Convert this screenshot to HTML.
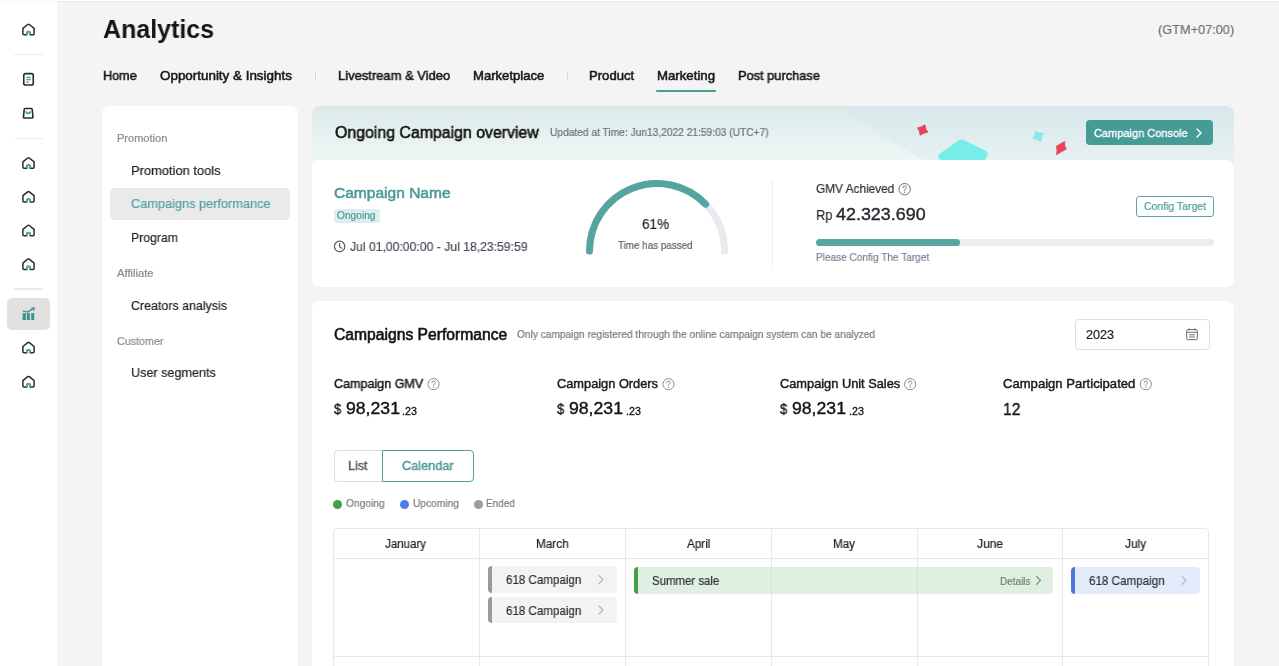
<!DOCTYPE html>
<html><head><meta charset="utf-8"><title>Analytics</title>
<style>
html,body{margin:0;padding:0}
body{width:1279px;height:666px;overflow:hidden;position:relative;background:#f4f4f4;font-family:"Liberation Sans",sans-serif}
.t{position:absolute;line-height:1;white-space:nowrap;transform-origin:0 0;will-change:transform}
.b{position:absolute}
.ic{position:absolute;overflow:visible}
</style></head><body>
<div class="b" style="left:0px;top:0px;width:1279px;height:1px;background:#fdfdfd"></div>
<div class="b" style="left:57px;top:1px;width:1222px;height:1px;background:#eeeeee"></div>
<div class="b" style="left:0px;top:1px;width:57px;height:1px;background:#f7f7f7"></div>
<div class="b" style="left:0px;top:2px;width:57px;height:664px;background:#fff"></div>
<div class="b" style="left:14px;top:53.5px;width:29px;height:1.5px;background:#ebebeb"></div>
<div class="b" style="left:14px;top:137.5px;width:29px;height:1.5px;background:#ebebeb"></div>
<div class="b" style="left:14px;top:288px;width:29px;height:1.5px;background:#ebebeb"></div>
<div class="b" style="left:7px;top:298px;width:43px;height:32px;background:#e1e1e1;border-radius:5px"></div>
<svg class="ic" style="left:20px;top:21px" width="16" height="16" viewBox="0.00 0.00 16 16"><g transform="translate(0.50 0.50)"><path d="M2.4 6.9 L7.2 3.0 Q8 2.4 8.8 3.0 L13.6 6.9 V12.2 Q13.6 13.2 12.6 13.2 H9.6 V11.8 Q9.6 10.1 8 10.1 Q6.4 10.1 6.4 11.8 V13.2 H3.4 Q2.4 13.2 2.4 12.2 Z" fill="none" stroke="#2b2b2b" stroke-width="1.5" stroke-linejoin="round"/><path d="M6.4 13.2 V11.8 Q6.4 10.1 8 10.1 Q9.6 10.1 9.6 11.8 V13.2" fill="none" stroke="#55aaa5" stroke-width="1.5"/></g></svg>
<svg class="ic" style="left:20px;top:155px" width="16" height="16" viewBox="0.00 0.00 16 16"><g transform="translate(0.50 0.00)"><path d="M2.4 6.9 L7.2 3.0 Q8 2.4 8.8 3.0 L13.6 6.9 V12.2 Q13.6 13.2 12.6 13.2 H9.6 V11.8 Q9.6 10.1 8 10.1 Q6.4 10.1 6.4 11.8 V13.2 H3.4 Q2.4 13.2 2.4 12.2 Z" fill="none" stroke="#2b2b2b" stroke-width="1.5" stroke-linejoin="round"/><path d="M6.4 13.2 V11.8 Q6.4 10.1 8 10.1 Q9.6 10.1 9.6 11.8 V13.2" fill="none" stroke="#55aaa5" stroke-width="1.5"/></g></svg>
<svg class="ic" style="left:20px;top:188px" width="16" height="16" viewBox="0.00 0.00 16 16"><g transform="translate(0.50 0.80)"><path d="M2.4 6.9 L7.2 3.0 Q8 2.4 8.8 3.0 L13.6 6.9 V12.2 Q13.6 13.2 12.6 13.2 H9.6 V11.8 Q9.6 10.1 8 10.1 Q6.4 10.1 6.4 11.8 V13.2 H3.4 Q2.4 13.2 2.4 12.2 Z" fill="none" stroke="#2b2b2b" stroke-width="1.5" stroke-linejoin="round"/><path d="M6.4 13.2 V11.8 Q6.4 10.1 8 10.1 Q9.6 10.1 9.6 11.8 V13.2" fill="none" stroke="#55aaa5" stroke-width="1.5"/></g></svg>
<svg class="ic" style="left:20px;top:222px" width="16" height="16" viewBox="0.00 0.00 16 16"><g transform="translate(0.50 0.50)"><path d="M2.4 6.9 L7.2 3.0 Q8 2.4 8.8 3.0 L13.6 6.9 V12.2 Q13.6 13.2 12.6 13.2 H9.6 V11.8 Q9.6 10.1 8 10.1 Q6.4 10.1 6.4 11.8 V13.2 H3.4 Q2.4 13.2 2.4 12.2 Z" fill="none" stroke="#2b2b2b" stroke-width="1.5" stroke-linejoin="round"/><path d="M6.4 13.2 V11.8 Q6.4 10.1 8 10.1 Q9.6 10.1 9.6 11.8 V13.2" fill="none" stroke="#55aaa5" stroke-width="1.5"/></g></svg>
<svg class="ic" style="left:20px;top:256px" width="16" height="16" viewBox="0.00 0.00 16 16"><g transform="translate(0.50 0.20)"><path d="M2.4 6.9 L7.2 3.0 Q8 2.4 8.8 3.0 L13.6 6.9 V12.2 Q13.6 13.2 12.6 13.2 H9.6 V11.8 Q9.6 10.1 8 10.1 Q6.4 10.1 6.4 11.8 V13.2 H3.4 Q2.4 13.2 2.4 12.2 Z" fill="none" stroke="#2b2b2b" stroke-width="1.5" stroke-linejoin="round"/><path d="M6.4 13.2 V11.8 Q6.4 10.1 8 10.1 Q9.6 10.1 9.6 11.8 V13.2" fill="none" stroke="#55aaa5" stroke-width="1.5"/></g></svg>
<svg class="ic" style="left:20px;top:339px" width="16" height="16" viewBox="0.00 0.00 16 16"><g transform="translate(0.50 0.60)"><path d="M2.4 6.9 L7.2 3.0 Q8 2.4 8.8 3.0 L13.6 6.9 V12.2 Q13.6 13.2 12.6 13.2 H9.6 V11.8 Q9.6 10.1 8 10.1 Q6.4 10.1 6.4 11.8 V13.2 H3.4 Q2.4 13.2 2.4 12.2 Z" fill="none" stroke="#2b2b2b" stroke-width="1.5" stroke-linejoin="round"/><path d="M6.4 13.2 V11.8 Q6.4 10.1 8 10.1 Q9.6 10.1 9.6 11.8 V13.2" fill="none" stroke="#55aaa5" stroke-width="1.5"/></g></svg>
<svg class="ic" style="left:20px;top:373px" width="16" height="16" viewBox="0.00 0.00 16 16"><g transform="translate(0.50 0.70)"><path d="M2.4 6.9 L7.2 3.0 Q8 2.4 8.8 3.0 L13.6 6.9 V12.2 Q13.6 13.2 12.6 13.2 H9.6 V11.8 Q9.6 10.1 8 10.1 Q6.4 10.1 6.4 11.8 V13.2 H3.4 Q2.4 13.2 2.4 12.2 Z" fill="none" stroke="#2b2b2b" stroke-width="1.5" stroke-linejoin="round"/><path d="M6.4 13.2 V11.8 Q6.4 10.1 8 10.1 Q9.6 10.1 9.6 11.8 V13.2" fill="none" stroke="#55aaa5" stroke-width="1.5"/></g></svg>
<svg class="ic" style="left:20px;top:71px" width="16" height="16" viewBox="-0.50 0.00 16 16"><rect x="3.25" y="2.65" width="9.5" height="11.3" rx="1.8" fill="none" stroke="#2b2b2b" stroke-width="1.6"/><path d="M5.8 6.3 H10.3 M5.8 8.5 H10.3 M5.8 11 H8.3" stroke="#55aaa5" stroke-width="1.3"/></svg>
<svg class="ic" style="left:20px;top:105px" width="16" height="16" viewBox="-0.20 0.00 16 16"><path d="M5.0 3.45 H11.0 Q11.9 3.45 12.0 4.3 L12.75 11.9 Q12.85 12.95 11.8 12.95 H4.2 Q3.15 12.95 3.25 11.9 L4.0 4.3 Q4.1 3.45 5.0 3.45 Z" fill="none" stroke="#2b2b2b" stroke-width="1.6" stroke-linejoin="round"/><path d="M5.9 6.9 Q8 9.9 10.1 6.9" fill="none" stroke="#4a9c97" stroke-width="1.7" stroke-linecap="round"/></svg>
<svg class="ic" style="left:20px;top:306px" width="16" height="16" viewBox="0.00 0.00 16 16"><rect x="2.6" y="7.1" width="3.3" height="6.9" fill="#3e928c"/><rect x="6.9" y="7.1" width="3.0" height="6.9" fill="#3e928c"/><rect x="11.2" y="7.1" width="3.0" height="6.9" fill="#3e928c"/><path d="M2.8 4.8 L7.3 6.1 L12.2 3.4" fill="none" stroke="#3e928c" stroke-width="1.4"/><path d="M11.2 1.9 L14.6 1.5 L13.9 4.8 Z" fill="#3e928c" stroke="#3e928c" stroke-width="0.5" stroke-linejoin="round"/></svg>
<div class="t" style="left:102.90px;top:16.66px;font-size:25.50px;font-weight:700;color:#141414;transform:scaleX(0.9790);">Analytics</div>
<div class="t" style="left:1157.59px;top:23.39px;font-size:13.60px;font-weight:400;color:#6f6f6f;transform:scaleX(0.9381);-webkit-text-stroke:0.2px #6f6f6f;">(GTM+07:00)</div>
<div class="t" style="left:102.86px;top:69.41px;font-size:13.10px;font-weight:400;color:#181818;transform:scaleX(0.9607);-webkit-text-stroke:0.55px #181818;">Home</div>
<div class="t" style="left:159.98px;top:69.41px;font-size:13.10px;font-weight:400;color:#181818;transform:scaleX(1.0237);-webkit-text-stroke:0.55px #181818;">Opportunity &amp; Insights</div>
<div class="t" style="left:337.52px;top:69.41px;font-size:13.10px;font-weight:400;color:#181818;transform:scaleX(0.9899);-webkit-text-stroke:0.55px #181818;">Livestream &amp; Video</div>
<div class="t" style="left:472.78px;top:69.41px;font-size:13.10px;font-weight:400;color:#181818;-webkit-text-stroke:0.55px #181818;">Marketplace</div>
<div class="t" style="left:589.27px;top:69.41px;font-size:13.10px;font-weight:400;color:#181818;transform:scaleX(0.9935);-webkit-text-stroke:0.55px #181818;">Product</div>
<div class="t" style="left:656.68px;top:69.41px;font-size:13.10px;font-weight:400;color:#181818;transform:scaleX(1.0090);-webkit-text-stroke:0.55px #181818;">Marketing</div>
<div class="t" style="left:737.57px;top:69.41px;font-size:13.10px;font-weight:400;color:#181818;transform:scaleX(0.9787);-webkit-text-stroke:0.55px #181818;">Post purchase</div>
<div class="b" style="left:315px;top:70.5px;width:1px;height:10.0px;background:#d9d9d9"></div>
<div class="b" style="left:566.5px;top:70.5px;width:1.0px;height:10.0px;background:#d9d9d9"></div>
<div class="b" style="left:656px;top:90px;width:60px;height:2px;background:#4b9d98;border-radius:1px"></div>
<div class="b" style="left:102px;top:106px;width:196px;height:614px;background:#fff;border-radius:8px"></div>
<div class="b" style="left:110px;top:188px;width:180px;height:31.5px;background:#eaeaea;border-radius:4px"></div>
<div class="t" style="left:116.50px;top:133.39px;font-size:11.00px;font-weight:400;color:#8a8a8a;transform:scaleX(1.0033);-webkit-text-stroke:0.2px #8a8a8a;">Promotion</div>
<div class="t" style="left:131.20px;top:163.67px;font-size:13.50px;font-weight:400;color:#222;transform:scaleX(0.9554);-webkit-text-stroke:0.2px #222;">Promotion tools</div>
<div class="t" style="left:131.09px;top:196.87px;font-size:13.50px;font-weight:400;color:#4fa19c;transform:scaleX(0.9444);-webkit-text-stroke:0.2px #4fa19c;">Campaigns performance</div>
<div class="t" style="left:131.09px;top:230.57px;font-size:13.50px;font-weight:400;color:#222;transform:scaleX(0.9082);-webkit-text-stroke:0.2px #222;">Program</div>
<div class="t" style="left:116.90px;top:268.39px;font-size:11.00px;font-weight:400;color:#8a8a8a;transform:scaleX(1.0201);-webkit-text-stroke:0.2px #8a8a8a;">Affiliate</div>
<div class="t" style="left:131.09px;top:298.67px;font-size:13.50px;font-weight:400;color:#222;transform:scaleX(0.9207);-webkit-text-stroke:0.2px #222;">Creators analysis</div>
<div class="t" style="left:116.90px;top:335.69px;font-size:11.00px;font-weight:400;color:#8a8a8a;transform:scaleX(0.9753);-webkit-text-stroke:0.2px #8a8a8a;">Customer</div>
<div class="t" style="left:131.09px;top:365.57px;font-size:13.50px;font-weight:400;color:#222;transform:scaleX(0.9342);-webkit-text-stroke:0.2px #222;">User segments</div>
<div class="b" style="left:312px;top:106px;width:922.4px;height:70px;border-radius:8px;overflow:hidden;background:linear-gradient(180deg,#dbe9e9 0%,#f0f7f6 80%)"><div style="position:absolute;left:228px;top:-1366px;width:1520px;height:1520px;border-radius:50%;background:linear-gradient(180deg,#d8e8eb 1366px,#e6f1f1 1420px)"></div></div>
<svg class="ic" style="left:0px;top:0px" width="1279" height="160" viewBox="0.00 0.00 1279 160"><path d="M924.76 125.42 Q924.58 129.23 927.26 131.90 Q923.32 131.95 920.43 134.77 Q920.62 130.82 917.93 128.02 Q921.87 128.11 924.76 125.42 Z" fill="#e8435a" stroke="#e8435a" stroke-width="1.6" stroke-linejoin="round"/><path d="M939 158.5 Q937 156 940 153.5 L958.5 140.5 Q961.5 138.6 964.5 140.2 L986 151 Q989 153 987.5 155.5 L985 160 H940 Z" fill="#77ede9"/><path d="M1035.68 131.50 Q1038.92 134.07 1043.19 133.57 Q1040.36 136.84 1040.64 141.08 Q1037.49 138.29 1033.32 138.55 Q1036.05 135.51 1035.68 131.50 Z" fill="#8de8e8" stroke="#8de8e8" stroke-width="1.6" stroke-linejoin="round"/><path d="M1056.1 146.2 L1064.7 141.3 Q1064.2 146 1066.4 149.1 L1056.4 154.8 Q1057.8 150 1056.1 146.2 Z" fill="#e8435a" stroke="#e8435a" stroke-width="0.6" stroke-linejoin="round"/></svg>
<div class="t" style="left:334.90px;top:124.27px;font-size:16.10px;font-weight:400;color:#141414;transform:scaleX(0.9861);-webkit-text-stroke:0.6px #141414;">Ongoing Campaign overview</div>
<div class="t" style="left:550.39px;top:127.37px;font-size:10.90px;font-weight:400;color:#6c7071;transform:scaleX(0.9368);-webkit-text-stroke:0.2px #6c7071;">Updated at Time: Jun13,2022 21:59:03 (UTC+7)</div>
<div class="b" style="left:1086px;top:120px;width:127px;height:25px;background:#479b97;border-radius:4px"></div>
<div class="t" style="left:1093.92px;top:126.68px;font-size:11.60px;font-weight:400;color:#fff;transform:scaleX(0.9494);-webkit-text-stroke:0.35px #fff;">Campaign Console</div>
<svg class="ic" style="left:1194px;top:127px" width="10" height="12" viewBox="0.00 0.00 10 12"><path d="M3 2 L7 6 L3 10" fill="none" stroke="#fff" stroke-width="1.4" stroke-linecap="round" stroke-linejoin="round"/></svg>
<div class="b" style="left:312px;top:159.5px;width:922.4000000000001px;height:127.0px;background:#fff;border-radius:8px"></div>
<div class="t" style="left:334.18px;top:184.76px;font-size:15.40px;font-weight:400;color:#4b9b96;transform:scaleX(1.0094);-webkit-text-stroke:0.55px #4b9b96;">Campaign Name</div>
<div class="b" style="left:333.5px;top:209px;width:46.5px;height:14px;background:#dcefee;border-radius:3px"></div>
<div class="t" style="left:337.30px;top:211.47px;font-size:10.20px;font-weight:400;color:#4b9b96;-webkit-text-stroke:0.2px #4b9b96;">Ongoing</div>
<svg class="ic" style="left:332px;top:239px" width="15" height="15" viewBox="0.00 0.00 15 15"><circle cx="7.6" cy="7.4" r="5.2" fill="none" stroke="#555a66" stroke-width="1.2"/><path d="M7.6 4.6 V7.6 L9.6 9.2" fill="none" stroke="#555a66" stroke-width="1.2" stroke-linecap="round"/></svg>
<div class="t" style="left:349.59px;top:239.70px;font-size:13.00px;font-weight:400;color:#474c58;transform:scaleX(0.9374);-webkit-text-stroke:0.2px #474c58;">Jul 01,00:00:00 - Jul 18,23:59:59</div>
<svg class="ic" style="left:576px;top:170px" width="170" height="100" viewBox="576.00 170.00 170 100"><path d="M589.50 251.00 A67.5 67.5 0 0 1 724.50 251.00" fill="none" stroke="#e9e9ef" stroke-width="7" stroke-linecap="round"/><path d="M589.50 251.00 A67.5 67.5 0 0 1 705.56 204.11" fill="none" stroke="#54a59f" stroke-width="7" stroke-linecap="round"/></svg>
<div class="t" style="left:641.69px;top:217.04px;font-size:14.60px;font-weight:400;color:#26262e;transform:scaleX(0.9314);-webkit-text-stroke:0.2px #26262e;">61%</div>
<div class="t" style="left:618.09px;top:239.61px;font-size:10.50px;font-weight:400;color:#5c606b;transform:scaleX(0.9365);-webkit-text-stroke:0.2px #5c606b;">Time has passed</div>
<div class="b" style="left:772px;top:180px;width:1px;height:85.5px;background:#ececf0"></div>
<div class="t" style="left:816.39px;top:183.03px;font-size:12.60px;font-weight:400;color:#2e2f38;transform:scaleX(0.9397);-webkit-text-stroke:0.2px #2e2f38;">GMV Achieved</div>
<svg class="ic" style="left:896px;top:181px" width="16" height="16" viewBox="-0.60 -0.20 16 16"><circle cx="8" cy="8" r="5.70" fill="none" stroke="#6b6e78" stroke-width="1"/><path d="M6.3 6.5 Q6.3 4.8 8 4.8 Q9.7 4.8 9.7 6.4 Q9.7 7.4 8.6 7.9 Q8 8.2 8 9.1" fill="none" stroke="#6b6e78" stroke-width="1" stroke-linecap="round"/><circle cx="8" cy="11" r="0.65" fill="#6b6e78"/></svg>
<div class="t" style="left:816.36px;top:207.77px;font-size:14.80px;font-weight:400;color:#26262e;transform:scaleX(0.8650);-webkit-text-stroke:0.15px #26262e;">Rp</div>
<div class="t" style="left:835.99px;top:206.78px;font-size:16.80px;font-weight:400;color:#26262e;transform:scaleX(1.0671);-webkit-text-stroke:0.35px #26262e;">42.323.690</div>
<div class="b" style="left:816px;top:239px;width:397.5px;height:7.300000000000011px;background:#ebebf0;border-radius:4px"></div>
<div class="b" style="left:816px;top:239px;width:144px;height:7.300000000000011px;background:#56a59f;border-radius:4px"></div>
<div class="t" style="left:816.39px;top:252.07px;font-size:10.90px;font-weight:400;color:#7b7f8f;transform:scaleX(0.9235);-webkit-text-stroke:0.2px #7b7f8f;">Please Config The Target</div>
<div class="b" style="left:1136px;top:195.5px;width:77.5px;height:21.30000000000001px;border:1px solid #58a7a2;border-radius:3px;box-sizing:border-box"></div>
<div class="t" style="left:1143.69px;top:200.18px;font-size:11.60px;font-weight:400;color:#4b9b96;transform:scaleX(0.9016);-webkit-text-stroke:0.2px #4b9b96;">Config Target</div>
<div class="b" style="left:312px;top:300.5px;width:922.4000000000001px;height:459.5px;background:#fff;border-radius:8px"></div>
<div class="t" style="left:334.10px;top:326.59px;font-size:15.60px;font-weight:400;color:#141414;transform:scaleX(1.0044);-webkit-text-stroke:0.6px #141414;">Campaigns Performance</div>
<div class="t" style="left:517.49px;top:329.47px;font-size:10.90px;font-weight:400;color:#777777;transform:scaleX(0.9315);-webkit-text-stroke:0.2px #777777;">Only campaign registered through the online campaign system can be analyzed</div>
<div class="b" style="left:1075px;top:318.5px;width:135px;height:31.80000000000001px;border:1px solid #dcdcdc;border-radius:4px;box-sizing:border-box"></div>
<div class="t" style="left:1085.70px;top:328.80px;font-size:12.40px;font-weight:400;color:#222;transform:scaleX(1.0148);-webkit-text-stroke:0.2px #222;">2023</div>
<svg class="ic" style="left:1184px;top:326px" width="16" height="16" viewBox="0.00 0.00 16 16"><rect x="2.7" y="3.6" width="10.6" height="10" rx="1" fill="none" stroke="#6e6e6e" stroke-width="1"/><path d="M5.2 2.2 V4.6 M10.8 2.2 V4.6 M2.7 6.3 H13.3 M5.2 8.8 H10.8 M5.2 11 H10.8" fill="none" stroke="#6e6e6e" stroke-width="1"/></svg>
<div class="t" style="left:334.12px;top:377.96px;font-size:12.80px;font-weight:400;color:#1a1a1a;transform:scaleX(0.9803);-webkit-text-stroke:0.45px #1a1a1a;">Campaign GMV</div>
<svg class="ic" style="left:425px;top:376px" width="16" height="16" viewBox="-0.60 -0.20 16 16"><circle cx="8" cy="8" r="5.60" fill="none" stroke="#8c8c8c" stroke-width="1"/><path d="M6.3 6.5 Q6.3 4.8 8 4.8 Q9.7 4.8 9.7 6.4 Q9.7 7.4 8.6 7.9 Q8 8.2 8 9.1" fill="none" stroke="#8c8c8c" stroke-width="1" stroke-linecap="round"/><circle cx="8" cy="11" r="0.65" fill="#8c8c8c"/></svg>
<div class="t" style="left:557.22px;top:377.96px;font-size:12.80px;font-weight:400;color:#1a1a1a;-webkit-text-stroke:0.45px #1a1a1a;">Campaign Orders</div>
<svg class="ic" style="left:660px;top:376px" width="16" height="16" viewBox="-0.50 -0.20 16 16"><circle cx="8" cy="8" r="5.60" fill="none" stroke="#8c8c8c" stroke-width="1"/><path d="M6.3 6.5 Q6.3 4.8 8 4.8 Q9.7 4.8 9.7 6.4 Q9.7 7.4 8.6 7.9 Q8 8.2 8 9.1" fill="none" stroke="#8c8c8c" stroke-width="1" stroke-linecap="round"/><circle cx="8" cy="11" r="0.65" fill="#8c8c8c"/></svg>
<div class="t" style="left:780.22px;top:377.96px;font-size:12.80px;font-weight:400;color:#1a1a1a;-webkit-text-stroke:0.45px #1a1a1a;">Campaign Unit Sales</div>
<svg class="ic" style="left:902px;top:376px" width="16" height="16" viewBox="-0.20 -0.20 16 16"><circle cx="8" cy="8" r="5.60" fill="none" stroke="#8c8c8c" stroke-width="1"/><path d="M6.3 6.5 Q6.3 4.8 8 4.8 Q9.7 4.8 9.7 6.4 Q9.7 7.4 8.6 7.9 Q8 8.2 8 9.1" fill="none" stroke="#8c8c8c" stroke-width="1" stroke-linecap="round"/><circle cx="8" cy="11" r="0.65" fill="#8c8c8c"/></svg>
<div class="t" style="left:1003.03px;top:377.96px;font-size:12.80px;font-weight:400;color:#1a1a1a;transform:scaleX(1.0220);-webkit-text-stroke:0.45px #1a1a1a;">Campaign Participated</div>
<svg class="ic" style="left:1137px;top:376px" width="16" height="16" viewBox="-0.80 -0.20 16 16"><circle cx="8" cy="8" r="5.60" fill="none" stroke="#8c8c8c" stroke-width="1"/><path d="M6.3 6.5 Q6.3 4.8 8 4.8 Q9.7 4.8 9.7 6.4 Q9.7 7.4 8.6 7.9 Q8 8.2 8 9.1" fill="none" stroke="#8c8c8c" stroke-width="1" stroke-linecap="round"/><circle cx="8" cy="11" r="0.65" fill="#8c8c8c"/></svg>
<div class="t" style="left:334.04px;top:402.43px;font-size:14.50px;font-weight:400;color:#141414;transform:scaleX(0.9085);-webkit-text-stroke:0.3px #141414;">$</div>
<div class="t" style="left:345.51px;top:400.95px;font-size:16.60px;font-weight:400;color:#141414;transform:scaleX(1.0630);-webkit-text-stroke:0.4px #141414;">98,231</div>
<div class="t" style="left:402.45px;top:406.11px;font-size:10.50px;font-weight:400;color:#141414;transform:scaleX(1.0205);-webkit-text-stroke:0.3px #141414;">.23</div>
<div class="t" style="left:557.14px;top:402.43px;font-size:14.50px;font-weight:400;color:#141414;transform:scaleX(0.9085);-webkit-text-stroke:0.3px #141414;">$</div>
<div class="t" style="left:568.61px;top:400.95px;font-size:16.60px;font-weight:400;color:#141414;transform:scaleX(1.0630);-webkit-text-stroke:0.4px #141414;">98,231</div>
<div class="t" style="left:625.55px;top:406.11px;font-size:10.50px;font-weight:400;color:#141414;transform:scaleX(1.0205);-webkit-text-stroke:0.3px #141414;">.23</div>
<div class="t" style="left:780.14px;top:402.43px;font-size:14.50px;font-weight:400;color:#141414;transform:scaleX(0.9085);-webkit-text-stroke:0.3px #141414;">$</div>
<div class="t" style="left:791.61px;top:400.95px;font-size:16.60px;font-weight:400;color:#141414;transform:scaleX(1.0630);-webkit-text-stroke:0.4px #141414;">98,231</div>
<div class="t" style="left:848.55px;top:406.11px;font-size:10.50px;font-weight:400;color:#141414;transform:scaleX(1.0205);-webkit-text-stroke:0.3px #141414;">.23</div>
<div class="t" style="left:1003.18px;top:400.57px;font-size:17.40px;font-weight:400;color:#141414;transform:scaleX(0.9009);-webkit-text-stroke:0.4px #141414;">12</div>
<div class="b" style="left:333.5px;top:450px;width:50.5px;height:32px;border:1px solid #dedede;border-right:none;border-radius:4px 0 0 4px;box-sizing:border-box"></div>
<div class="b" style="left:382px;top:450px;width:92px;height:32px;border:1px solid #4f9f9a;border-radius:0 4px 4px 0;box-sizing:border-box"></div>
<div class="t" style="left:348.11px;top:459.43px;font-size:13.20px;font-weight:400;color:#5a5a5a;transform:scaleX(0.9527);-webkit-text-stroke:0.45px #5a5a5a;">List</div>
<div class="t" style="left:401.82px;top:459.43px;font-size:13.20px;font-weight:400;color:#4b9b96;transform:scaleX(0.9656);-webkit-text-stroke:0.45px #4b9b96;">Calendar</div>
<div class="b" style="left:333.3px;top:500.2px;width:9px;height:9px;border-radius:50%;background:#43a047"></div>
<div class="b" style="left:399.9px;top:500.2px;width:9px;height:9px;border-radius:50%;background:#4a7fe8"></div>
<div class="b" style="left:473.5px;top:500.2px;width:9px;height:9px;border-radius:50%;background:#9c9c9c"></div>
<div class="t" style="left:346.09px;top:498.27px;font-size:10.90px;font-weight:400;color:#7a7a7a;transform:scaleX(0.9417);-webkit-text-stroke:0.2px #7a7a7a;">Ongoing</div>
<div class="t" style="left:412.99px;top:498.27px;font-size:10.90px;font-weight:400;color:#7a7a7a;transform:scaleX(0.9355);-webkit-text-stroke:0.2px #7a7a7a;">Upcoming</div>
<div class="t" style="left:486.09px;top:498.27px;font-size:10.90px;font-weight:400;color:#7a7a7a;transform:scaleX(0.9144);-webkit-text-stroke:0.2px #7a7a7a;">Ended</div>
<div class="b" style="left:333px;top:528px;width:876px;height:232px;border:1px solid #e8e8e8;border-radius:4px;box-sizing:border-box"></div>
<div class="b" style="left:333px;top:558px;width:876px;height:1px;background:#e8e8e8"></div>
<div class="b" style="left:333px;top:656px;width:876px;height:1px;background:#e8e8e8"></div>
<div class="b" style="left:479px;top:528px;width:1px;height:232px;background:#e8e8e8"></div>
<div class="b" style="left:625px;top:528px;width:1px;height:232px;background:#e8e8e8"></div>
<div class="b" style="left:771px;top:528px;width:1px;height:232px;background:#e8e8e8"></div>
<div class="b" style="left:917px;top:528px;width:1px;height:232px;background:#e8e8e8"></div>
<div class="b" style="left:1062px;top:528px;width:1px;height:232px;background:#e8e8e8"></div>
<div class="t" style="left:385.49px;top:537.59px;font-size:12.30px;font-weight:400;color:#1e1e1e;transform:scaleX(0.9373);-webkit-text-stroke:0.2px #1e1e1e;">January</div>
<div class="t" style="left:535.70px;top:537.59px;font-size:12.30px;font-weight:400;color:#1e1e1e;transform:scaleX(0.9570);-webkit-text-stroke:0.2px #1e1e1e;">March</div>
<div class="t" style="left:686.59px;top:537.59px;font-size:12.30px;font-weight:400;color:#1e1e1e;transform:scaleX(0.9476);-webkit-text-stroke:0.2px #1e1e1e;">April</div>
<div class="t" style="left:832.89px;top:537.59px;font-size:12.30px;font-weight:400;color:#1e1e1e;transform:scaleX(0.9474);-webkit-text-stroke:0.2px #1e1e1e;">May</div>
<div class="t" style="left:976.80px;top:537.59px;font-size:12.30px;font-weight:400;color:#1e1e1e;transform:scaleX(0.9786);-webkit-text-stroke:0.2px #1e1e1e;">June</div>
<div class="t" style="left:1124.80px;top:537.59px;font-size:12.30px;font-weight:400;color:#1e1e1e;transform:scaleX(0.9647);-webkit-text-stroke:0.2px #1e1e1e;">July</div>
<div class="b" style="left:488px;top:566.3px;width:129px;height:26.700000000000045px;background:#f3f3f3;border-radius:4px;overflow:hidden;border-left:4px solid #9a9a9a;box-sizing:border-box"></div>
<div class="t" style="left:505.89px;top:574.33px;font-size:12.90px;font-weight:400;color:#2d2f36;transform:scaleX(0.8976);-webkit-text-stroke:0.2px #2d2f36;">618 Campaign</div>
<svg class="ic" style="left:597px;top:574px" width="8" height="10" viewBox="0.00 -0.65 8 10"><path d="M2 1 L6 5 L2 9" fill="none" stroke="#b0b0b0" stroke-width="1.1" stroke-linecap="round" stroke-linejoin="round"/></svg>
<div class="b" style="left:488px;top:597px;width:129px;height:26px;background:#f3f3f3;border-radius:4px;overflow:hidden;border-left:4px solid #9a9a9a;box-sizing:border-box"></div>
<div class="t" style="left:505.89px;top:604.68px;font-size:12.90px;font-weight:400;color:#2d2f36;transform:scaleX(0.8976);-webkit-text-stroke:0.2px #2d2f36;">618 Campaign</div>
<svg class="ic" style="left:597px;top:605px" width="8" height="10" viewBox="0.00 0.00 8 10"><path d="M2 1 L6 5 L2 9" fill="none" stroke="#b0b0b0" stroke-width="1.1" stroke-linecap="round" stroke-linejoin="round"/></svg>
<div class="b" style="left:633.7px;top:567px;width:419.29999999999995px;height:26.600000000000023px;background:#dff0e3;border-radius:4px;border-left:4px solid #43a047;box-sizing:border-box"></div>
<div class="t" style="left:651.79px;top:574.67px;font-size:12.20px;font-weight:400;color:#2d2f36;transform:scaleX(0.9365);-webkit-text-stroke:0.2px #2d2f36;">Summer sale</div>
<div class="b" style="left:771px;top:567px;width:1px;height:26.600000000000023px;background:#d2e2d6"></div>
<div class="b" style="left:917px;top:567px;width:1px;height:26.600000000000023px;background:#d2e2d6"></div>
<div class="t" style="left:1000.29px;top:575.52px;font-size:11.20px;font-weight:400;color:#6f7d72;transform:scaleX(0.8917);-webkit-text-stroke:0.2px #6f7d72;">Details</div>
<svg class="ic" style="left:1034px;top:575px" width="8" height="10" viewBox="-0.50 -0.30 8 10"><path d="M2 1 L6 5 L2 9" fill="none" stroke="#6f7d72" stroke-width="1.1" stroke-linecap="round" stroke-linejoin="round"/></svg>
<div class="b" style="left:1071px;top:567px;width:129px;height:26.600000000000023px;background:#e3ebfb;border-radius:4px;border-left:4px solid #4a78dc;box-sizing:border-box"></div>
<div class="t" style="left:1089.09px;top:575.08px;font-size:12.90px;font-weight:400;color:#2d2f36;transform:scaleX(0.9023);-webkit-text-stroke:0.2px #2d2f36;">618 Campaign</div>
<svg class="ic" style="left:1180px;top:575px" width="8" height="10" viewBox="0.00 -0.30 8 10"><path d="M2 1 L6 5 L2 9" fill="none" stroke="#b0b4c0" stroke-width="1.1" stroke-linecap="round" stroke-linejoin="round"/></svg>
</body></html>
